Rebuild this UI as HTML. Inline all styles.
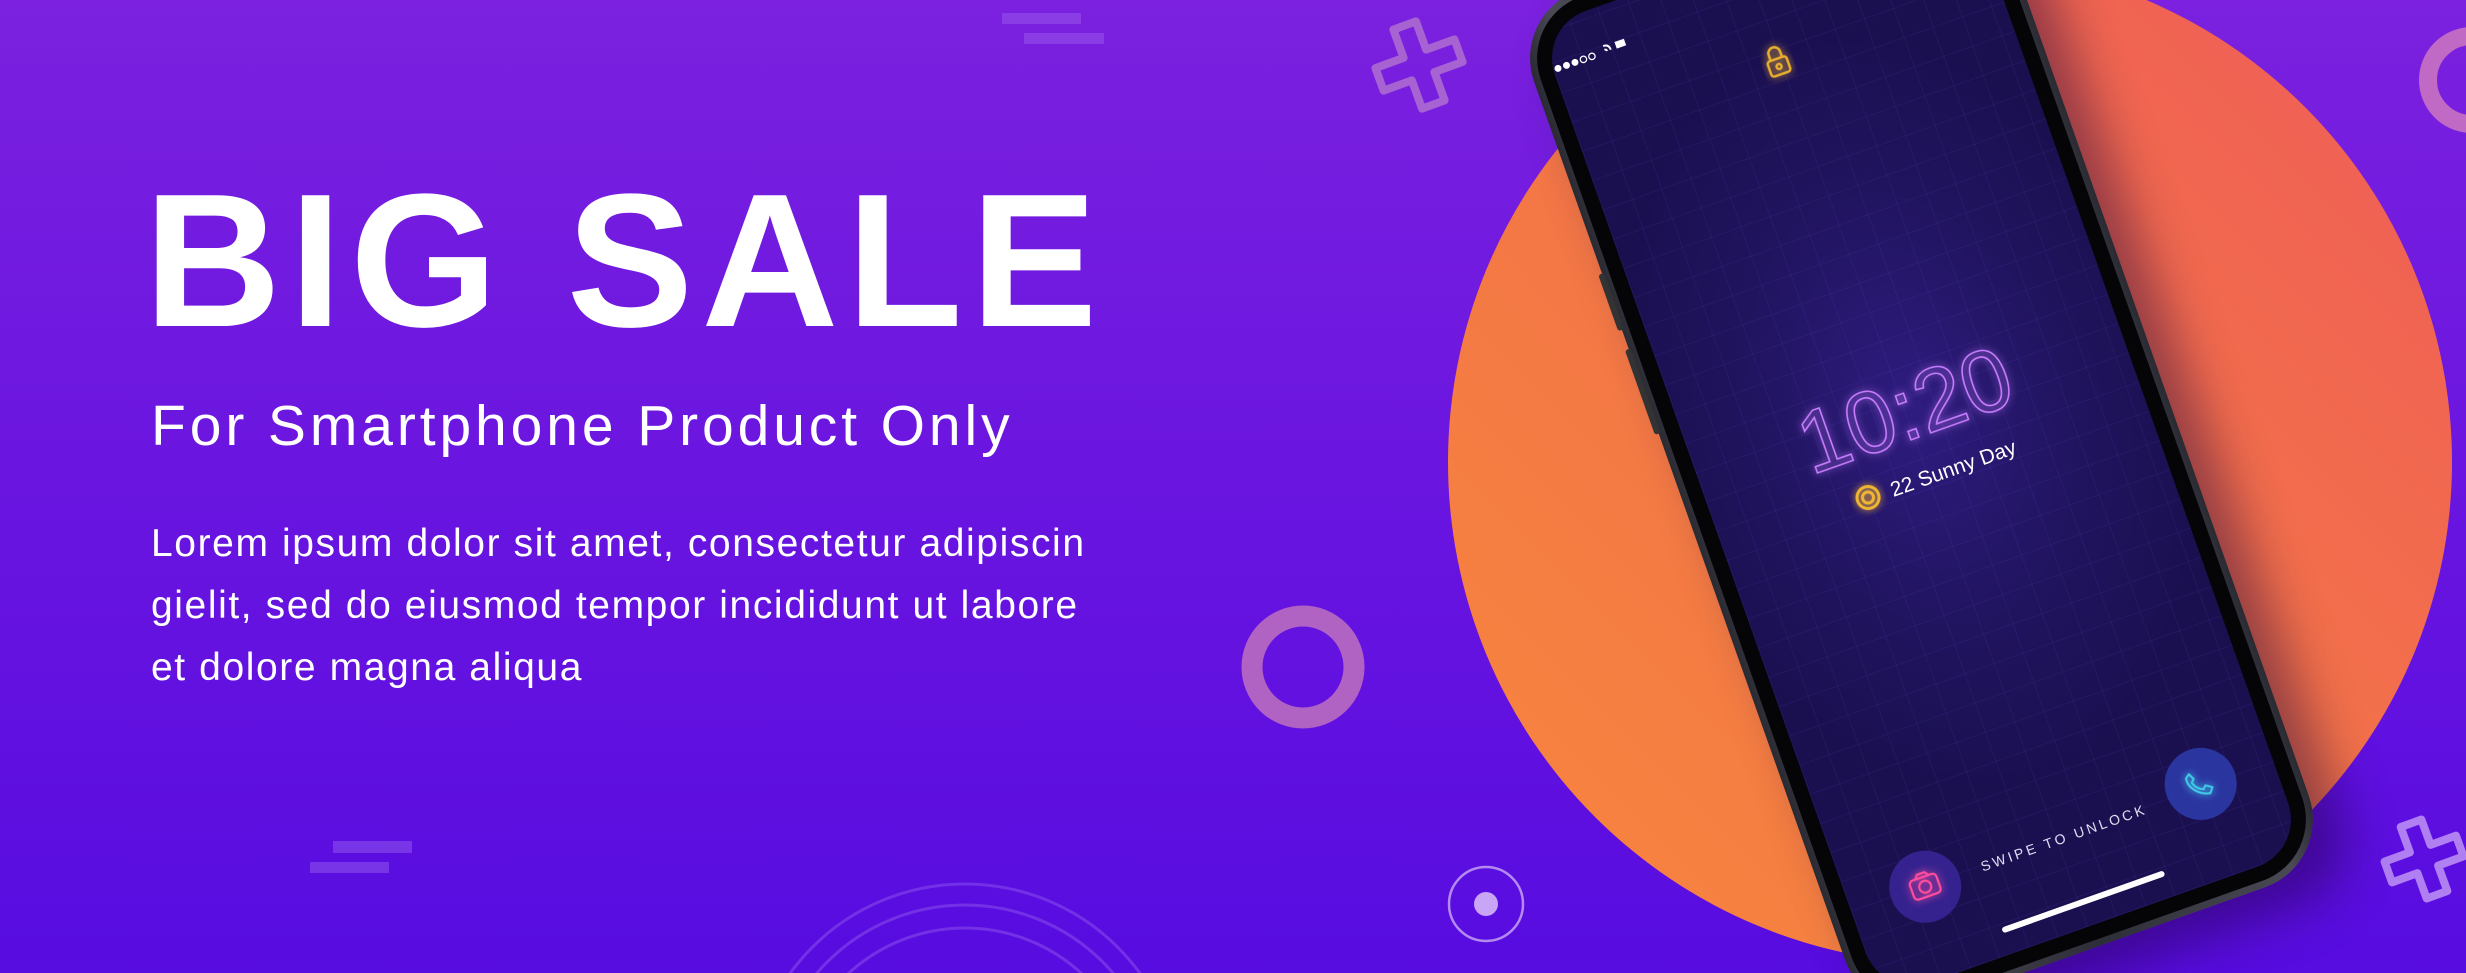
<!DOCTYPE html>
<html><head><meta charset="utf-8"><style>
*{margin:0;padding:0;box-sizing:border-box}
html,body{width:2466px;height:973px;overflow:hidden}
#wrap{position:relative;width:2466px;height:973px;overflow:hidden;background:linear-gradient(180deg,#7b21df 0%,#6814e0 55%,#570ce0 100%);font-family:"Liberation Sans",sans-serif;color:#fff}
.abs{position:absolute}
#big{left:144px;top:166px;font-size:190px;font-weight:bold;line-height:1;white-space:nowrap;letter-spacing:8px}
#sub{left:151px;top:398px;font-size:57px;line-height:1;white-space:nowrap;letter-spacing:3.9px}
#body{left:151px;top:513px;font-size:39px;line-height:62px;white-space:nowrap;letter-spacing:1.6px}
#phone{left:1683px;top:-55px;width:492px;height:1030px;transform:rotate(-19.5deg)}
#frame{position:absolute;left:0;right:0;top:-45px;bottom:0;border-radius:72px;background:linear-gradient(90deg,#2a2a33,#4a4a55 8%,#2e2e38 50%,#4a4a55 92%,#2a2a33);box-shadow:25px 30px 50px rgba(30,0,60,.45)}
#bez{position:absolute;inset:7px;border-radius:65px;background:#050508}
#scr{position:absolute;inset:22px;border-radius:50px;overflow:hidden;background:radial-gradient(ellipse 60% 38% at 50% 47%,#2f1c80 0%,#211460 55%,#1a1050 100%)}
#grid{position:absolute;inset:0;background-image:repeating-linear-gradient(0deg,rgba(120,100,255,.08) 0 1px,transparent 1px 31px),repeating-linear-gradient(90deg,rgba(120,100,255,.08) 0 1px,transparent 1px 31px)}
</style></head><body><div id="wrap">
<svg class="abs" style="left:0;top:0" width="2466" height="973">
 <defs><linearGradient id="og" x1="0" y1="1" x2="1" y2="0"><stop offset="0" stop-color="#f7873c"/><stop offset=".5" stop-color="#f37448"/><stop offset="1" stop-color="#ef5a58"/></linearGradient></defs>
 <circle cx="1950" cy="462" r="502" fill="url(#og)"/>
 <rect x="1002" y="13" width="79" height="11" fill="#8f45e6" opacity=".8"/>
 <rect x="1024" y="33" width="80" height="11" fill="#8f45e6" opacity=".8"/>
 <rect x="333" y="841" width="79" height="12" fill="#8040e8" opacity=".8"/>
 <rect x="310" y="862" width="79" height="11" fill="#8040e8" opacity=".8"/>
 <g fill="none" stroke="#7a3ae8" stroke-width="3" opacity=".8">
  <circle cx="965" cy="1100" r="216"/><circle cx="965" cy="1100" r="195"/><circle cx="965" cy="1100" r="172"/>
 </g>
 <circle cx="1303" cy="667" r="51" fill="none" stroke="#b163c4" stroke-width="21"/>
 <circle cx="2472" cy="80" r="44" fill="none" stroke="#c06ac6" stroke-width="18"/>
 <circle cx="1486" cy="904" r="37" fill="none" stroke="#b48af0" stroke-width="2.5"/>
 <circle cx="1486" cy="904" r="12" fill="#c9a6f5"/>
 <g transform="translate(1419,65) rotate(-20)" fill="none" stroke="#a863d2" stroke-width="8" stroke-linejoin="round">
  <path d="M-12,-42 L12,-42 L12,-12 L42,-12 L42,12 L12,12 L12,42 L-12,42 L-12,12 L-42,12 L-42,-12 L-12,-12 Z"/>
 </g>
 <g transform="translate(2424,859) rotate(-20)" fill="none" stroke="#b07ff2" stroke-width="8" stroke-linejoin="round">
  <path d="M-11,-38 L11,-38 L11,-11 L38,-11 L38,11 L11,11 L11,38 L-11,38 L-11,11 L-38,11 L-38,-11 L-11,-11 Z"/>
 </g>
</svg>
<div id="big" class="abs">BIG SALE</div>
<div id="sub" class="abs">For Smartphone Product Only</div>
<div id="body" class="abs">Lorem ipsum dolor sit amet, consectetur adipiscin<br>gielit, sed do eiusmod tempor incididunt ut labore<br>et dolore magna aliqua</div>
<div id="phone" class="abs">
 <div id="frame">
  <div style="position:absolute;left:-4px;top:275px;width:6px;height:60px;background:#333;border-radius:3px"></div>
  <div style="position:absolute;left:-4px;top:355px;width:6px;height:90px;background:#333;border-radius:3px"></div>
  <div id="bez"></div>
  <div id="scr"><div id="grid"></div></div>
  <div style="position:absolute;left:176px;top:20px;width:140px;height:30px;background:#050508;border-radius:0 0 18px 18px"></div>
 </div>
 <svg style="position:absolute;left:0;top:0;overflow:visible" width="492" height="1030">
  <defs>
   <filter id="gl" x="-30%" y="-30%" width="160%" height="160%"><feGaussianBlur stdDeviation="4" result="b"/><feMerge><feMergeNode in="b"/><feMergeNode in="SourceGraphic"/></feMerge></filter>
  </defs>
  <g transform="translate(-19,-30)">
  <g fill="#fff"><circle cx="46" cy="52" r="3.5"/><circle cx="55" cy="52" r="3.5"/><circle cx="64" cy="52" r="3.5"/></g>
  <g fill="none" stroke="#fff" stroke-width="1.3"><circle cx="73" cy="52" r="3.2"/><circle cx="82" cy="52" r="3.2"/></g>
  <path d="M96,46 q6,0 6,6 M96,50 q2,0 2,2" fill="none" stroke="#fff" stroke-width="2"/>
  <rect x="108" y="46" width="10" height="7" fill="#fff"/>
  </g>
  <g filter="url(#gl)" fill="none" stroke="#e8ae2e" stroke-width="2.5">
   <rect x="226" y="86" width="20" height="16" rx="3"/>
   <path d="M230,86 v-6 a6,6 0 0 1 12,0 v6"/>
   <circle cx="236" cy="94" r="2.5"/>
  </g>
  <text x="240" y="490" text-anchor="middle" font-family="Liberation Sans,sans-serif" font-size="88" fill="none" stroke="#c97eff" stroke-width="1.6" filter="url(#gl)">10:20</text>
  <g filter="url(#gl)" fill="none" stroke="#f0b530" stroke-width="3"><circle cx="176" cy="530" r="11"/><circle cx="176" cy="530" r="5.5"/></g>
  <text x="200" y="538" font-family="Liberation Sans,sans-serif" font-size="21" fill="#fff">22  Sunny Day</text>
  <text x="247" y="921" text-anchor="middle" font-family="Liberation Sans,sans-serif" font-size="14" letter-spacing="3" fill="#e0dcf0">SWIPE  TO UNLOCK</text>
  <circle cx="100" cy="916" r="36" fill="#3a2596" opacity=".9"/>
  <g filter="url(#gl)" fill="none" stroke="#ff4d9e" stroke-width="2.2"><rect x="86" y="906" width="28" height="20" rx="4"/><circle cx="100" cy="916" r="6"/><path d="M93,906 l3,-4 h8 l3,4"/></g>
  <circle cx="394" cy="911" r="36" fill="#2d3aa8" opacity=".9"/>
  <path filter="url(#gl)" d="M382,901 c-2,8 6,20 18,22 l4,-5 -6,-4 -3,3 c-5,-2 -8,-6 -9,-10 l3,-3 -3,-6 z" fill="none" stroke="#3fc7e6" stroke-width="2.2" stroke-linejoin="round"/>
  <rect x="158" y="980" width="172" height="6" rx="3" fill="#fff"/>
 </svg>
</div>
</div></body></html>
